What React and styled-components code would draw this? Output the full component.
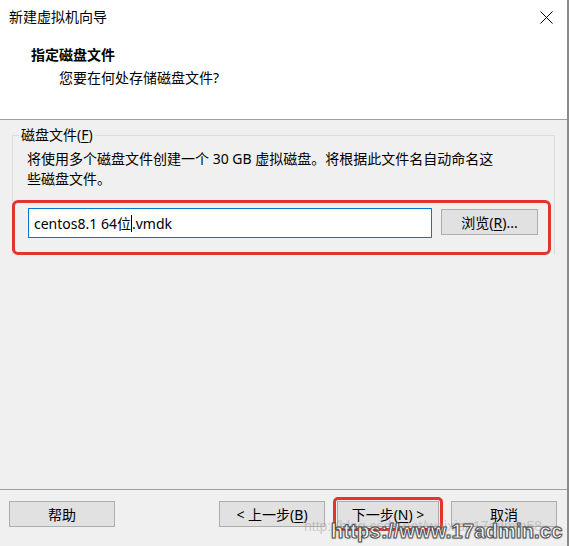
import React from 'react';
import styled, { createGlobalStyle } from 'styled-components';

const GlobalStyle = createGlobalStyle`
  html, body {
    margin: 0;
    padding: 0;
    background: #f0f0f0;
  }
  body {
    font-family: "Noto Sans", "Noto Sans CJK SC", sans-serif;
    font-size: 14px;
    color: #000;
  }
`;

const Window = styled.div`
  position: relative;
  width: 569px;
  height: 546px;
  box-sizing: border-box;
  border-right: 2px solid #8a8a8a;
  display: flex;
  flex-direction: column;
  background: #f0f0f0;
  overflow: hidden;
`;

const TitleBar = styled.div`
  height: 34px;
  display: flex;
  align-items: center;
  justify-content: space-between;
  padding: 0 14px 0 9px;
  background: #fff;
  font-size: 14px;
  line-height: 20px;
`;

const Header = styled.div`
  height: 74px;
  background: #fff;
  border-bottom: 1px solid #a0a0a0;
  padding: 11px 0 0 31px;
  box-sizing: content-box;
  line-height: 20px;

  h1 {
    margin: 0;
    font-size: 14px;
    font-weight: bold;
  }
  p {
    margin: 3px 0 0 28px;
  }
`;

const Body = styled.div`
  flex: 1;
  padding: 5px 12px 0;
`;

const Group = styled.fieldset`
  margin: 0;
  padding: 0 15px 0 14px;
  border: 1px solid #dcdcdc;
  border-bottom: none;
  min-width: 0;

  legend {
    padding: 0 2px;
    margin-left: -8px;
    line-height: 20px;
  }
  p {
    margin: 4px 0 0;
    line-height: 20px;
  }
`;

const Key = styled.span`
  text-decoration: underline;
  text-underline-offset: 2px;
`;

const Highlight = styled.div`
  display: flex;
  align-items: flex-start;
  gap: 9px;
  margin: 11px -12px 0 -15px;
  padding: 5px 10px 14px 13px;
  border: 3px solid #e5322d;
  border-radius: 6px;
`;

const PathInput = styled.div`
  flex: 1;
  height: 30px;
  box-sizing: border-box;
  border: 1px solid #0078d7;
  background: #fff;
  padding: 0 5px;
  display: flex;
  align-items: center;
  font-size: 14px;

  i {
    display: inline-block;
    width: 1px;
    height: 17px;
    background: #000;
    vertical-align: -3px;
  }
`;

const Button = styled.div`
  width: ${(p) => p.$w || 106}px;
  height: 26px;
  box-sizing: border-box;
  border: 1px solid #adadad;
  background: #e1e1e1;
  display: flex;
  align-items: center;
  justify-content: center;
  font-size: 14px;
  margin-top: ${(p) => p.$mt || 0}px;
`;

const Footer = styled.div`
  height: 45px;
  border-top: 1px solid #a0a0a0;
  padding: 11px 10px 0 9px;
  display: flex;
  justify-content: space-between;
  align-items: flex-start;
`;

const NavGroup = styled.div`
  display: flex;
  gap: 12px;
`;

const Marked = styled.div`
  margin: -4px;
  padding: 1px;
  border: 3px solid #e5322d;
  border-radius: 5px;
`;

const Watermark = styled.div`
  position: absolute;
  left: 331px;
  bottom: 3px;
  font-family: "Liberation Sans", Arial, sans-serif;
  font-weight: bold;
  font-size: 20px;
  letter-spacing: 0.2px;
  color: #fff;
  -webkit-text-stroke: 1px #555;
  text-shadow: 0 0 2px #333;
  white-space: nowrap;
`;

const FaintMark = styled.div`
  position: absolute;
  left: 304px;
  bottom: 12px;
  font-family: "Liberation Sans", Arial, sans-serif;
  font-size: 14px;
  color: rgba(150, 150, 150, 0.45);
  white-space: nowrap;
`;

const CloseIcon = () => (
  <svg width="13" height="13" viewBox="0 0 13 13">
    <path d="M0.5 0.5 L12.5 12.5 M12.5 0.5 L0.5 12.5" stroke="#000" strokeWidth="1" />
  </svg>
);

export default function App() {
  return (
    <>
      <GlobalStyle />
      <Window>
        <TitleBar>
          <span>新建虚拟机向导</span>
          <CloseIcon />
        </TitleBar>
        <Header>
          <h1>指定磁盘文件</h1>
          <p>您要在何处存储磁盘文件?</p>
        </Header>
        <Body>
          <Group>
            <legend>
              磁盘文件(<Key>F</Key>)
            </legend>
            <p>
              将使用多个磁盘文件创建一个 30 GB 虚拟磁盘。将根据此文件名自动命名这
              <br />
              些磁盘文件。
            </p>
            <Highlight>
              <PathInput>
                <span>
                  centos8.1 64位<i />.vmdk
                </span>
              </PathInput>
              <Button $w={97} $mt={1}>
                浏览(<Key>R</Key>)...
              </Button>
            </Highlight>
          </Group>
        </Body>
        <Footer>
          <Button>帮助</Button>
          <NavGroup>
            <Button>
              &lt; 上一步(<Key>B</Key>)
            </Button>
            <Marked>
              <Button $w={102}>
                下一步(<Key>N</Key>) &gt;
              </Button>
            </Marked>
            <Button>取消</Button>
          </NavGroup>
        </Footer>
        <FaintMark>http://blog.csdn.net/weixian17admin58</FaintMark>
        <Watermark>https://www.17admin.cc</Watermark>
      </Window>
    </>
  );
}
